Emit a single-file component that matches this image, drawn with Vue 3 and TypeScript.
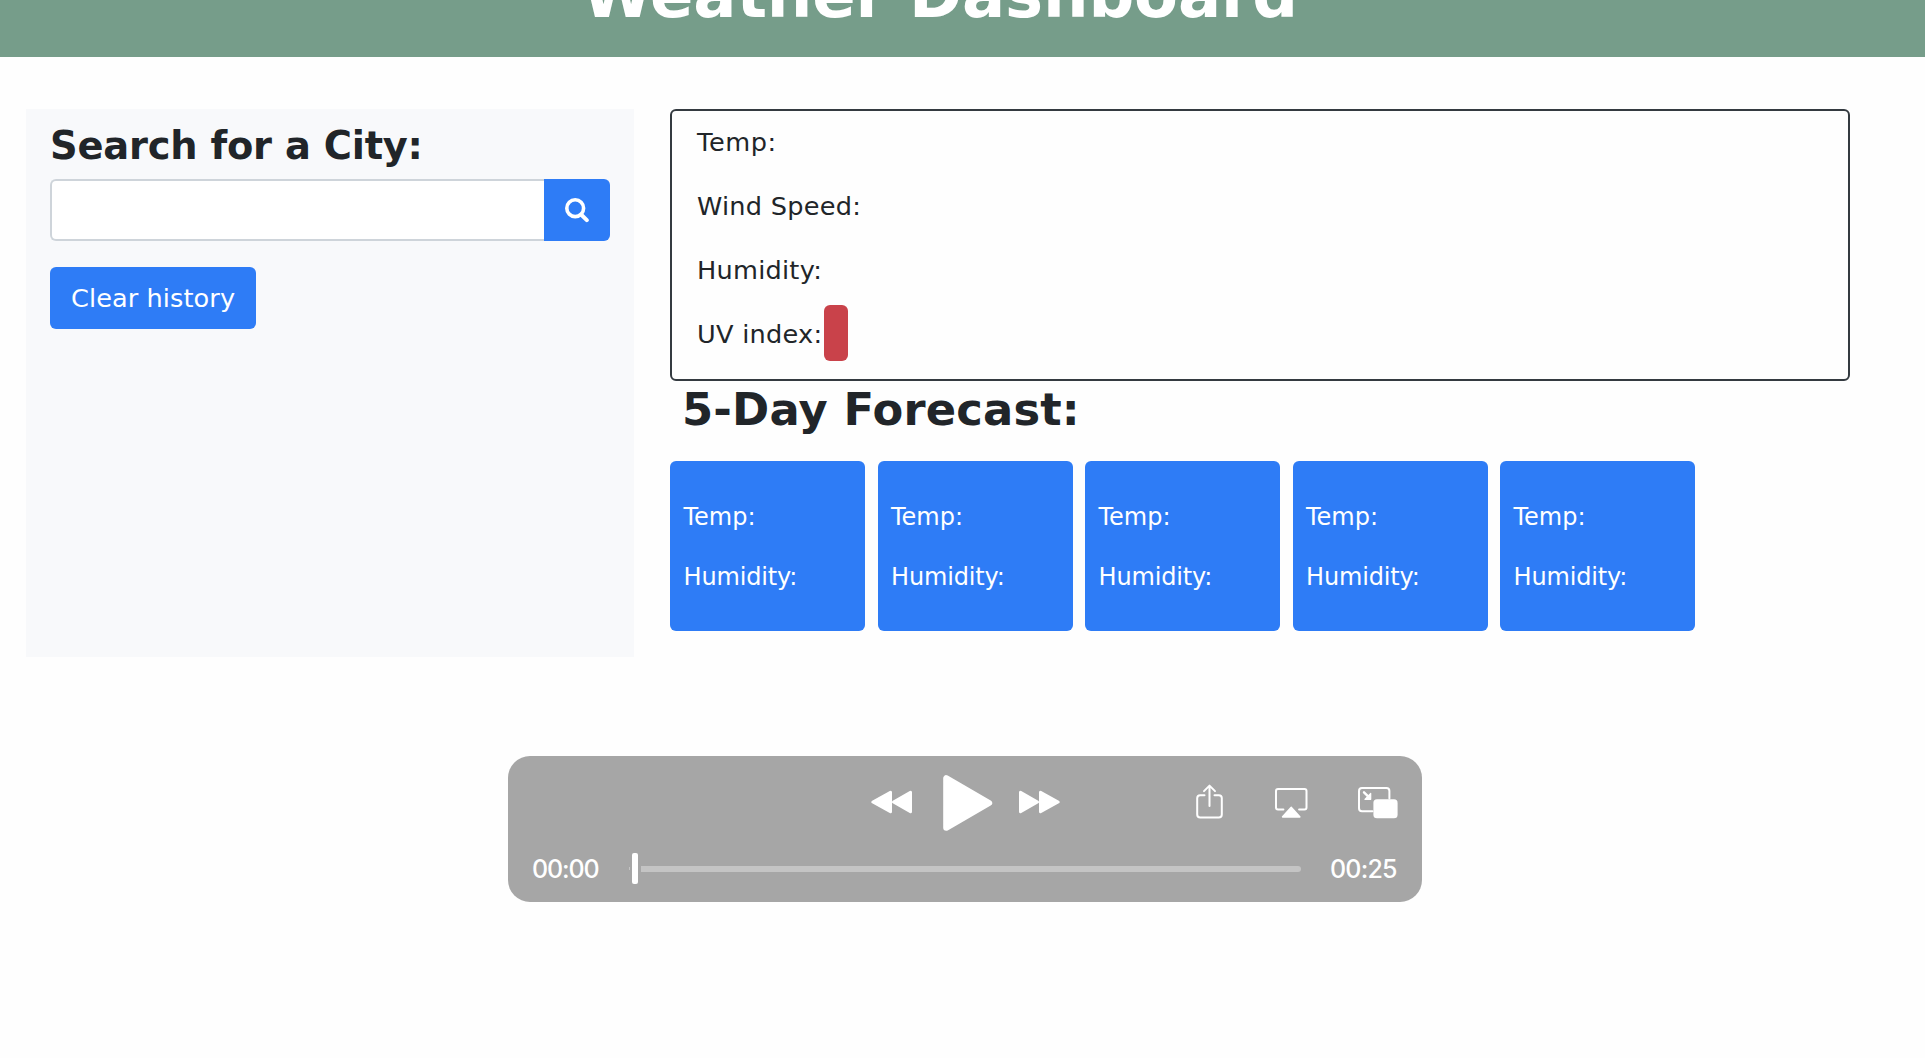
<script setup lang="ts">
const current: string[] = ['Temp:', 'Wind Speed:', 'Humidity:']
const days: number[] = [1, 2, 3, 4, 5]
</script>

<template>
  <div class="page">
    <header class="banner"><h1>Weather Dashboard</h1></header>
    <main class="content">
      <aside class="panel">
        <h2 class="search-title">Search for a City:</h2>
        <div class="search">
          <input type="text" class="field" aria-label="City" />
          <button class="search-btn" aria-label="Search">
            <svg width="26" height="26" viewBox="0 0 26 26" fill="none" stroke="#fff" stroke-linecap="round">
              <circle cx="11.2" cy="11.2" r="8.4" stroke-width="3.6" />
              <path d="M17.6 18 22.8 23.2" stroke-width="4" />
            </svg>
          </button>
        </div>
        <button class="clear"><span>Clear history</span></button>
      </aside>
      <section class="results">
        <div class="current">
          <p v-for="label in current" :key="label" :class="label.slice(0, 4).toLowerCase()">{{ label }}</p>
          <p class="uv-row"><span class="uv">UV index:</span><i class="badge"></i></p>
        </div>
        <h2 class="forecast-title">5-Day Forecast:</h2>
        <div class="cards">
          <article v-for="d in days" :key="d" class="card">
            <p>Temp:</p>
            <p class="humidity">Humidity:</p>
          </article>
        </div>
      </section>
    </main>
    <div class="player">
      <div class="controls">
        <svg class="rewind" width="42" height="24" viewBox="0 0 42 24" fill="#fff" stroke="#fff" stroke-width="3" stroke-linejoin="round">
          <path d="M19.5 2.2V21.8L1.9 12Z" /><path d="M39.5 2.2V21.8L22.5 12Z" />
        </svg>
        <svg class="play" width="50" height="56" viewBox="0 0 50 56" fill="#fff" stroke="#fff" stroke-width="6" stroke-linejoin="round">
          <path d="M3.2 3.2V52.8L46.2 28Z" />
        </svg>
        <svg class="forward" width="42" height="24" viewBox="0 0 42 24" fill="#fff" stroke="#fff" stroke-width="3" stroke-linejoin="round">
          <path d="M22.5 2.2V21.8L40.1 12Z" /><path d="M2.5 2.2V21.8L19.5 12Z" />
        </svg>
        <svg class="share" width="28" height="36" viewBox="0 0 28 36" fill="none" stroke="#fff" stroke-width="2" stroke-linecap="round" stroke-linejoin="round">
          <path d="M8.5 11.2H4.2Q1.2 11.2 1.2 14.2V30.6Q1.2 33.6 4.2 33.6H22.8Q25.8 33.6 25.8 30.6V14.2Q25.8 11.2 22.8 11.2H18.5M13.5 22V1.7M8 7.1 13.5 1.6 19 7.1" />
        </svg>
        <svg class="airplay" width="33" height="32" viewBox="0 0 33 32" fill="none" stroke="#fff" stroke-width="2" stroke-linecap="round" stroke-linejoin="round">
          <path d="M8.4 21.4H3Q1 21.4 1 19.4V3Q1 1 3 1H29.5Q31.5 1 31.5 3V19.4Q31.5 21.4 29.5 21.4H24.1" />
          <path d="M16.2 19.6 24.6 28.8H7.8Z" fill="#fff" />
        </svg>
        <svg class="pip" width="40" height="32" viewBox="0 0 40 32" fill="none" stroke="#fff" stroke-width="2" stroke-linecap="round" stroke-linejoin="round">
          <path d="M14.5 24.2H4Q1 24.2 1 21.2V4Q1 1 4 1H28.4Q31.4 1 31.4 4V11.5" />
          <path d="M6 5.3 11.4 10.7" stroke-width="2.4" />
          <path d="M12.7 6.5V12.3H6.9Z" fill="#fff" stroke-width="1.2" />
          <rect x="15.4" y="12.3" width="24.2" height="19" rx="3.6" fill="#fff" stroke="none" />
        </svg>
      </div>
      <div class="timeline">
        <span class="time">00:00</span>
        <i class="played"></i><i class="thumb"></i><i class="track"></i>
        <span class="time total">00:25</span>
      </div>
    </div>
  </div>
</template>

<style>
body { margin: 0; background: #fefefe; }
</style>

<style scoped>
* { box-sizing: border-box; margin: 0; }
.page {
  position: relative;
  height: 1058px;
  overflow: hidden;
  font-family: Verdana, "DejaVu Sans", sans-serif;
  color: #212529;
  font-size: 25.6px;
  line-height: 38.4px;
}
.banner {
  height: 57px;
  display: flex;
  justify-content: center;
  align-items: flex-end;
  padding: 0 45px 20px 0;
  background: #769d8a;
  overflow: hidden;
}
h1 { flex: none; font-size: 64px; line-height: 84px; letter-spacing: -0.15px; color: #fff; white-space: nowrap; }
.content { display: flex; align-items: flex-start; padding: 52px 0 0 26px; }
.panel { width: 608px; height: 548px; padding: 14px 24px; background: #f8f9fb; }
.search-title { font-size: 38.4px; line-height: 46px; letter-spacing: -0.22px; white-space: nowrap; }
.search { display: flex; width: 560px; height: 62px; margin-top: 10px; }
.field { flex: 1; min-width: 0; border: 2px solid #ced4da; border-right: 0; border-radius: 6px 0 0 6px; background: #fff; }
.search-btn {
  width: 66px; border: 0; padding: 0; border-radius: 0 6px 6px 0; background: #2e7cf6;
  display: flex; align-items: center; justify-content: center;
}
.clear {
  display: block; width: 206px; height: 62px; margin-top: 26px; padding: 0 0 0 21px; text-align: left;
  border: 0; border-radius: 6px; background: #2e7cf6; color: #fff; font: inherit; letter-spacing: 0.08px; white-space: nowrap;
}
.results { width: 1180px; margin-left: 36px; }
.current { height: 272px; padding: 12px 25px 0; border: 2px solid #343a40; border-radius: 6px; }
.current p { height: 64px; display: flex; letter-spacing: 0.25px; white-space: nowrap; }
.current .temp { letter-spacing: 0.6px; }
.uv-row .uv { width: 127px; }
.badge { width: 24px; height: 56px; margin-top: -10px; border-radius: 6px; background: #c9424a; }
.forecast-title { padding-left: 12px; font-size: 44.8px; line-height: 54px; letter-spacing: 0.17px; white-space: nowrap; margin-top: 2px; }
.cards { display: flex; gap: 12.5px; margin-top: 24px; }
.card { width: 195px; height: 170px; padding: 38px 0 0 13.5px; border-radius: 6px; background: #2e7cf6; color: #fff; font-size: 24px; line-height: 36px; }
.card p { height: 60px; }
.card .humidity { letter-spacing: -0.15px; }
.player {
  position: absolute; left: 508px; top: 756px; width: 914px; height: 146px;
  border-radius: 22px; background: #a6a6a6;
}
.controls { display: flex; align-items: flex-start; height: 97px; padding-left: 363px; }
.controls svg { flex: none; display: block; }
.rewind { margin-top: 33.5px; }
.play { margin: 18.5px 0 0 30px; }
.forward { margin: 33.5px 0 0 25px; }
.share { margin: 28px 0 0 136px; }
.airplay { margin: 32px 0 0 51px; }
.pip { margin: 31px 0 0 50px; }
.timeline { display: flex; align-items: center; height: 31px; padding-left: 24px; }
.time { font-family: Inter, sans-serif; font-size: 25px; font-weight: 500; letter-spacing: -1.1px; color: #fff; line-height: 30px; width: 68px; white-space: nowrap; }
.total { letter-spacing: -0.8px; }
.played { width: 1px; height: 3px; margin-left: 29px; background: #c4c4c4; }
.thumb { width: 6px; height: 31px; margin-left: 2px; border-radius: 2px; background: #fff; }
.track { width: 660px; height: 6px; margin: 0 29px 0 3px; border-radius: 0 3px 3px 0; background: #c4c4c4; }
</style>
